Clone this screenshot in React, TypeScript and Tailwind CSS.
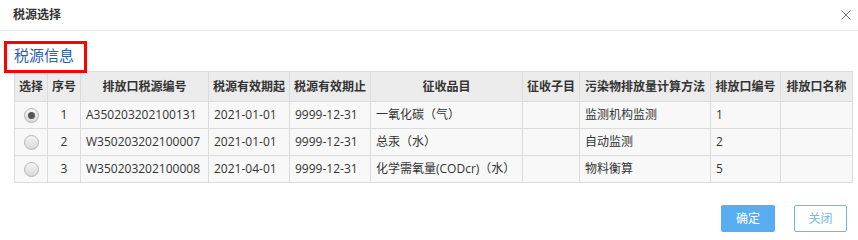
import React from "react";

const font = {
  fontFamily: '"Open Sans", "Noto Sans CJK SC", sans-serif',
};

interface Row {
  no: number;
  code: string;
  start: string;
  end: string;
  item: string;
  sub: string;
  method: string;
  outlet: string;
  name: string;
  checked: boolean;
}

const rows: Row[] = [
  {
    no: 1,
    code: "A350203202100131",
    start: "2021-01-01",
    end: "9999-12-31",
    item: "一氧化碳（气）",
    sub: "",
    method: "监测机构监测",
    outlet: "1",
    name: "",
    checked: true,
  },
  {
    no: 2,
    code: "W350203202100007",
    start: "2021-01-01",
    end: "9999-12-31",
    item: "总汞（水）",
    sub: "",
    method: "自动监测",
    outlet: "2",
    name: "",
    checked: false,
  },
  {
    no: 3,
    code: "W350203202100008",
    start: "2021-04-01",
    end: "9999-12-31",
    item: "化学需氧量(CODcr)（水）",
    sub: "",
    method: "物料衡算",
    outlet: "5",
    name: "",
    checked: false,
  },
];

const headers = [
  "选择",
  "序号",
  "排放口税源编号",
  "税源有效期起",
  "税源有效期止",
  "征收品目",
  "征收子目",
  "污染物排放量计算方法",
  "排放口编号",
  "排放口名称",
];

const widths = [33, 33, 128, 81, 81, 152, 57, 131, 70, 72];

function Radio({ checked }: { checked: boolean }) {
  return (
    <span className="mx-auto flex h-[15px] w-[15px] items-center justify-center rounded-full border border-[#b5b5b5] bg-gradient-to-b from-[#f4f4f4] to-[#d9d9d9]">
      {checked && <span className="block h-[7px] w-[7px] rounded-full bg-[#555]" />}
    </span>
  );
}

export default function App() {
  return (
    <div className="h-[237px] w-[858px] bg-white text-[12px] text-[#333]" style={font}>
      <div className="flex h-[31px] items-center justify-between border-b border-[#e8e8e8] pl-[13px] pr-[7px]">
        <span className="font-bold text-[#333]">税源选择</span>
        <svg width="10" height="10" viewBox="0 0 10 10" className="mr-[0px]">
          <path d="M0.5 0.5 L9.5 9.5 M9.5 0.5 L0.5 9.5" stroke="#777" strokeWidth="1" fill="none" />
        </svg>
      </div>

      <div className="relative pl-[14px] pt-[13px] pb-[5px] text-[15px] leading-[22px] text-[#2c5fae]">
        税源信息
        <div className="pointer-events-none absolute left-[4px] top-[10px] h-[32px] w-[83px] border-[3px] border-[#f00]" />
      </div>

      <div className="px-[14px]">
        <table className="w-[838px] table-fixed border-collapse">
          <colgroup>
            {widths.map((w, i) => (
              <col key={i} style={{ width: w }} />
            ))}
          </colgroup>
          <thead>
            <tr className="h-[30px] bg-[#ececec]">
              {headers.map((h) => (
                <th
                  key={h}
                  className="whitespace-nowrap border border-[#dcdcdc] p-0 text-center text-[12px] font-bold text-[#333]"
                >
                  {h}
                </th>
              ))}
            </tr>
          </thead>
          <tbody>
            {rows.map((r) => (
              <tr key={r.no} className="h-[27px] bg-[#f8f8f8]">
                <td className="border border-[#dcdcdc] p-0">
                  <Radio checked={r.checked} />
                </td>
                <td className="border border-[#dcdcdc] p-0 text-center">{r.no}</td>
                <td className="whitespace-nowrap border border-[#dcdcdc] pl-[5px]">{r.code}</td>
                <td className="whitespace-nowrap border border-[#dcdcdc] pl-[5px]">{r.start}</td>
                <td className="whitespace-nowrap border border-[#dcdcdc] pl-[5px]">{r.end}</td>
                <td className="whitespace-nowrap border border-[#dcdcdc] pl-[5px]">{r.item}</td>
                <td className="border border-[#dcdcdc] pl-[5px]">{r.sub}</td>
                <td className="whitespace-nowrap border border-[#dcdcdc] pl-[5px]">{r.method}</td>
                <td className="border border-[#dcdcdc] pl-[5px]">{r.outlet}</td>
                <td className="border border-[#dcdcdc] pl-[5px]">{r.name}</td>
              </tr>
            ))}
          </tbody>
        </table>
      </div>

      <div className="mt-[22px] flex justify-end gap-[19px] pr-[11px]">
        <button className="h-[27px] w-[54px] rounded-[2px] bg-[#58adf0] text-[12px] text-white">
          确定
        </button>
        <button className="h-[27px] w-[53px] rounded-[2px] border border-[#6db6f0] bg-white text-[12px] text-[#79b7ec]">
          关闭
        </button>
      </div>
    </div>
  );
}
